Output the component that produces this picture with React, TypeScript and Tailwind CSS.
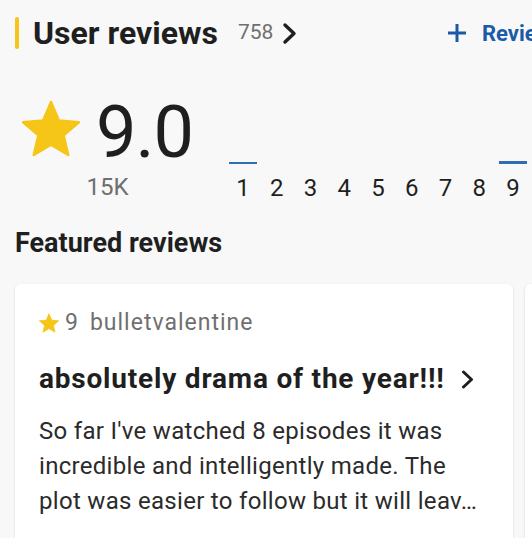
const STAR_PATH = 'M12 17.27L18.18 21l-1.64-7.03L22 9.24l-7.19-.61L12 2 9.19 8.63 2 9.24l5.46 4.73L5.82 21z'

function StarIcon({ className }: { className?: string }) {
  return (
    <svg viewBox="1.6 1.6 20.8 19.8" className={className}>
      <path d={STAR_PATH} fill="#f5c518" stroke="#f5c518" strokeWidth={0.9} strokeLinejoin="round" />
    </svg>
  )
}

const HISTOGRAM = [
  { n: 1, h: 2 },
  { n: 2, h: 0 },
  { n: 3, h: 0 },
  { n: 4, h: 0 },
  { n: 5, h: 0 },
  { n: 6, h: 0 },
  { n: 7, h: 0 },
  { n: 8, h: 0 },
  { n: 9, h: 3 },
]

export default function App() {
  return (
    <div className="w-[532px] h-[538px] overflow-hidden bg-[#f8f8f8] font-['Roboto',sans-serif] text-[#1f1f1f]">
      {/* header */}
      <div className="flex items-center h-[36px] mt-[15px] pl-[15px] whitespace-nowrap">
        <div className="w-[4px] h-[32px] rounded-full bg-[#f5c518]" />
        <h2 className="ml-[14px] text-[32px] leading-[36px] font-bold">User reviews</h2>
        <span className="ml-[20px] text-[21px] text-[#6f6f6f]">758</span>
        <svg viewBox="0 0 15 23" className="ml-[9px] w-[15px] h-[23px]">
          <polyline points="3,3 12,11.5 3,20" fill="none" stroke="#1f1f1f" strokeWidth={3.4} strokeLinecap="round" strokeLinejoin="round" />
        </svg>
        <div className="ml-auto flex items-center text-[#1b5aa6] w-[85px] overflow-hidden">
          <svg viewBox="0 0 20 20" className="w-[20px] h-[20px] shrink-0">
            <path d="M10 1v18M1 10h18" stroke="#1b5aa6" strokeWidth={3} fill="none" />
          </svg>
          <span className="ml-[15px] text-[22px] font-bold">Review</span>
        </div>
      </div>

      {/* rating */}
      <div className="flex items-end mt-[46px] pl-[22px]">
        <div className="flex flex-col items-center w-[171px]">
          <div className="flex items-start h-[72px]">
            <StarIcon className="w-[58px] h-[57px] mt-[3px]" />
            <span className="ml-[16px] text-[72px] leading-[72px] tracking-[-1px]">9.0</span>
          </div>
          <span className="mt-[4px] text-[24px] leading-[28px] text-[#6f6f6f]">15K</span>
        </div>
        <div className="flex items-end ml-[33px] mb-[-1px]">
          {HISTOGRAM.map((b) => (
            <div key={b.n} className="flex flex-col items-center w-[33.75px]">
              <div className="w-[28px] bg-[#2f6db5]" style={{ height: b.h }} />
              <span className="mt-[10px] text-[24px] leading-[28px]">{b.n}</span>
            </div>
          ))}
        </div>
      </div>

      {/* featured */}
      <h3 className="mt-[27px] pl-[15px] text-[27px] leading-[30px] font-bold">Featured reviews</h3>

      <div className="flex gap-[12px] mt-[26px] pl-[15px]">
        <div className="shrink-0 w-[498px] h-[280px] bg-white rounded-[6px] shadow-[0_1px_3px_rgba(0,0,0,0.13)] px-[24px] pt-[25px] whitespace-nowrap">
          <div className="flex items-center h-[28px]">
            <StarIcon className="w-[20px] h-[20px] mb-[1px]" />
            <span className="ml-[6px] text-[23px] leading-[28px] text-[#6f6f6f]">9</span>
            <span className="ml-[12px] text-[23px] leading-[28px] tracking-[1px] text-[#6f6f6f]">bulletvalentine</span>
          </div>
          <div className="flex items-center mt-[26px] h-[32px]">
            <span className="text-[28px] leading-[32px] tracking-[0.8px] font-bold">absolutely drama of the year!!!</span>
            <svg viewBox="0 0 13 19" className="ml-[16px] w-[13px] h-[19px]">
              <polyline points="2.5,2 10.5,9.5 2.5,17" fill="none" stroke="#1f1f1f" strokeWidth={3} strokeLinecap="round" strokeLinejoin="round" />
            </svg>
          </div>
          <div className="mt-[19px] text-[24px] leading-[35px] tracking-[0.3px] text-[#2b2b2b]">
            <div>So far I've watched 8 episodes it was</div>
            <div>incredible and intelligently made. The</div>
            <div>plot was easier to follow but it will leav…</div>
          </div>
        </div>
        <div className="shrink-0 w-[498px] h-[280px] bg-white rounded-[6px] shadow-[0_1px_3px_rgba(0,0,0,0.13)]" />
      </div>
    </div>
  )
}
